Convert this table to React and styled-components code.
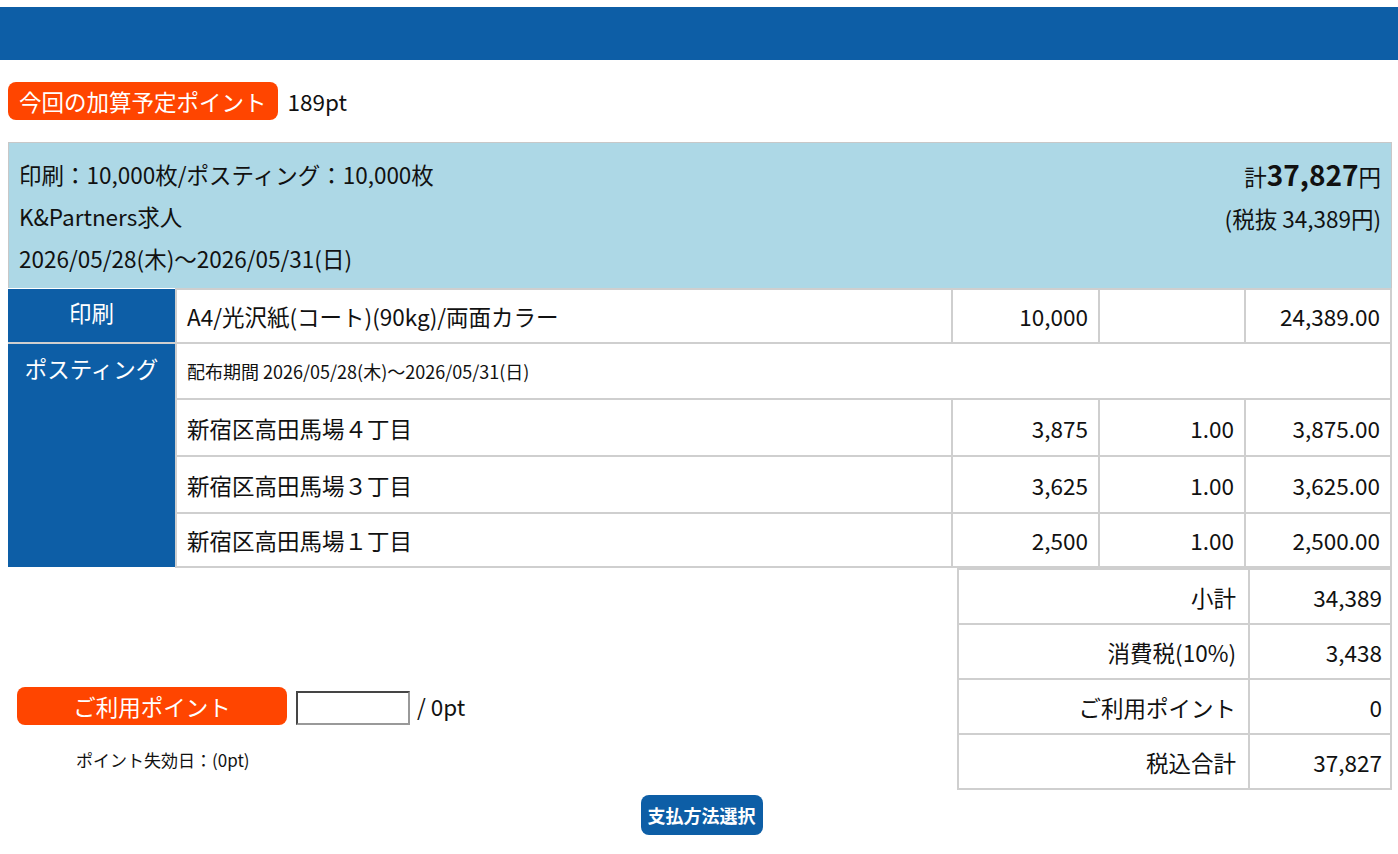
import React, { useState } from 'react';
import styled, { createGlobalStyle } from 'styled-components';

const GlobalStyle = createGlobalStyle`
  body {
    margin: 0;
    background: #fff;
    font-family: "Noto Sans CJK JP", "Noto Sans", sans-serif;
    color: #111;
  }
`;

const BLUE = '#0d5ea6';
const ORANGE = '#ff4500';
const LINE = '#cfcfcf';

const TopBar = styled.header`
  margin-top: 7px;
  height: 53px;
  background-color: ${BLUE};
`;

const Page = styled.main`
  padding: 22px 6px 20px 8px;
`;

const PointRow = styled.div`
  display: flex;
  align-items: center;
  gap: 10px;
  font-size: 22.5px;
`;

const Badge = styled.span`
  display: inline-flex;
  align-items: center;
  justify-content: center;
  height: 38px;
  width: ${props => props.w || 'auto'};
  padding: 0 11px;
  box-sizing: border-box;
  background-color: ${ORANGE};
  color: #fff;
  font-size: 22.5px;
  border-radius: 8px;
`;

const Summary = styled.section`
  margin-top: 22px;
  display: flex;
  justify-content: space-between;
  background-color: #add8e6;
  border: 1px solid #c8c8c8;
  border-bottom: none;
  padding: 10px 10px 4px 10px;
  height: 131px;
  font-size: 22.5px;
  line-height: 42px;
`;

const SummaryRight = styled.div`
  text-align: right;
  line-height: 42px;
`;

const Big = styled.strong`
  font-size: 28px;
  font-weight: 700;
`;

const Table = styled.table`
  width: 100%;
  border-collapse: collapse;
  table-layout: fixed;
  font-size: 22.5px;
`;

const Label = styled.th`
  width: 168px;
  background-color: ${BLUE};
  color: #fff;
  font-weight: 400;
  text-align: center;
  vertical-align: top;
  padding: ${props => props.pad || '10px 0'};
  border-top: ${props => props.sep ? `2px solid ${LINE}` : 'none'};
`;

const Cell = styled.td`
  height: ${props => props.h || 53}px;
  padding: 0 10px;
  border: 2px solid ${LINE};
  text-align: ${props => props.num ? 'right' : 'left'};
  font-size: ${props => props.small ? '18px' : '22.5px'};
  box-sizing: border-box;
`;

const Bottom = styled.div`
  display: flex;
  justify-content: space-between;
`;

const PointUse = styled.div`
  padding: 119px 0 0 9px;
`;

const UseRow = styled.div`
  display: flex;
  align-items: center;
  gap: 7px;
  font-size: 22.5px;
`;

const PointInput = styled.input`
  width: 114px;
  height: 34px;
  margin: 3px 0 0 2px;
  box-sizing: border-box;
  border: 2px inset #999;
  font-size: 18px;
`;

const Expire = styled.p`
  margin: 22px 0 0 59px;
  font-size: 17px;
`;

const Totals = styled.table`
  width: 435px;
  flex-shrink: 0;
  table-layout: fixed;
  border-collapse: collapse;
  font-size: 22.5px;
`;

const TotalCell = styled.td`
  height: 55px;
  padding: 0 ${props => props.label ? 12 : 8}px 0 0;
  border: 2px solid ${LINE};
  text-align: right;
  box-sizing: border-box;
`;

const Actions = styled.div`
  display: flex;
  justify-content: center;
  margin-top: 5px;
  padding-left: 3px;
`;

const PayButton = styled.button`
  height: 40px;
  padding: 0 7px;
  border: none;
  border-radius: 8px;
  background-color: ${BLUE};
  color: #fff;
  font-family: inherit;
  font-size: 18px;
  font-weight: 700;
  cursor: pointer;
`;

const areas = [
  { name: '新宿区高田馬場４丁目', qty: '3,875', rate: '1.00', amount: '3,875.00', h: 57 },
  { name: '新宿区高田馬場３丁目', qty: '3,625', rate: '1.00', amount: '3,625.00', h: 57 },
  { name: '新宿区高田馬場１丁目', qty: '2,500', rate: '1.00', amount: '2,500.00', h: 54 },
];

const totals = [
  ['小計', '34,389'],
  ['消費税(10%)', '3,438'],
  ['ご利用ポイント', '0'],
  ['税込合計', '37,827'],
];

export default function App() {
  const [points, setPoints] = useState('');

  return (
    <>
      <GlobalStyle />
      <TopBar />
      <Page>
        <PointRow>
          <Badge>今回の加算予定ポイント</Badge>
          <span>189pt</span>
        </PointRow>

        <Summary>
          <div>
            <div>印刷：10,000枚/ポスティング：10,000枚</div>
            <div>K&amp;Partners求人</div>
            <div>2026/05/28(木)〜2026/05/31(日)</div>
          </div>
          <SummaryRight>
            <div>計<Big>37,827</Big>円</div>
            <div>(税抜 34,389円)</div>
          </SummaryRight>
        </Summary>

        <Table>
          <colgroup>
            <col style={{ width: 168 }} />
            <col />
            <col style={{ width: 147 }} />
            <col style={{ width: 146 }} />
            <col style={{ width: 146 }} />
          </colgroup>
          <tbody>
            <tr>
              <Label pad="7px 0">印刷</Label>
              <Cell h={54}>A4/光沢紙(コート)(90kg)/両面カラー</Cell>
              <Cell num h={54}>10,000</Cell>
              <Cell num h={54}></Cell>
              <Cell num h={54}>24,389.00</Cell>
            </tr>
            <tr>
              <Label rowSpan={4} sep pad="8px 0">ポスティング</Label>
              <Cell colSpan={4} small h={56}>配布期間 2026/05/28(木)〜2026/05/31(日)</Cell>
            </tr>
            {areas.map(a => (
              <tr key={a.name}>
                <Cell h={a.h}>{a.name}</Cell>
                <Cell num h={a.h}>{a.qty}</Cell>
                <Cell num h={a.h}>{a.rate}</Cell>
                <Cell num h={a.h}>{a.amount}</Cell>
              </tr>
            ))}
          </tbody>
        </Table>

        <Bottom>
          <PointUse>
            <UseRow>
              <Badge w="270px">ご利用ポイント</Badge>
              <PointInput value={points} onChange={e => setPoints(e.target.value)} />
              <span>/ 0pt</span>
            </UseRow>
            <Expire>ポイント失効日：(0pt)</Expire>
          </PointUse>
          <Totals>
            <colgroup>
              <col />
              <col style={{ width: 142 }} />
            </colgroup>
            <tbody>
              {totals.map(([k, v]) => (
                <tr key={k}>
                  <TotalCell label>{k}</TotalCell>
                  <TotalCell>{v}</TotalCell>
                </tr>
              ))}
            </tbody>
          </Totals>
        </Bottom>

        <Actions>
          <PayButton>支払方法選択</PayButton>
        </Actions>
      </Page>
    </>
  );
}
